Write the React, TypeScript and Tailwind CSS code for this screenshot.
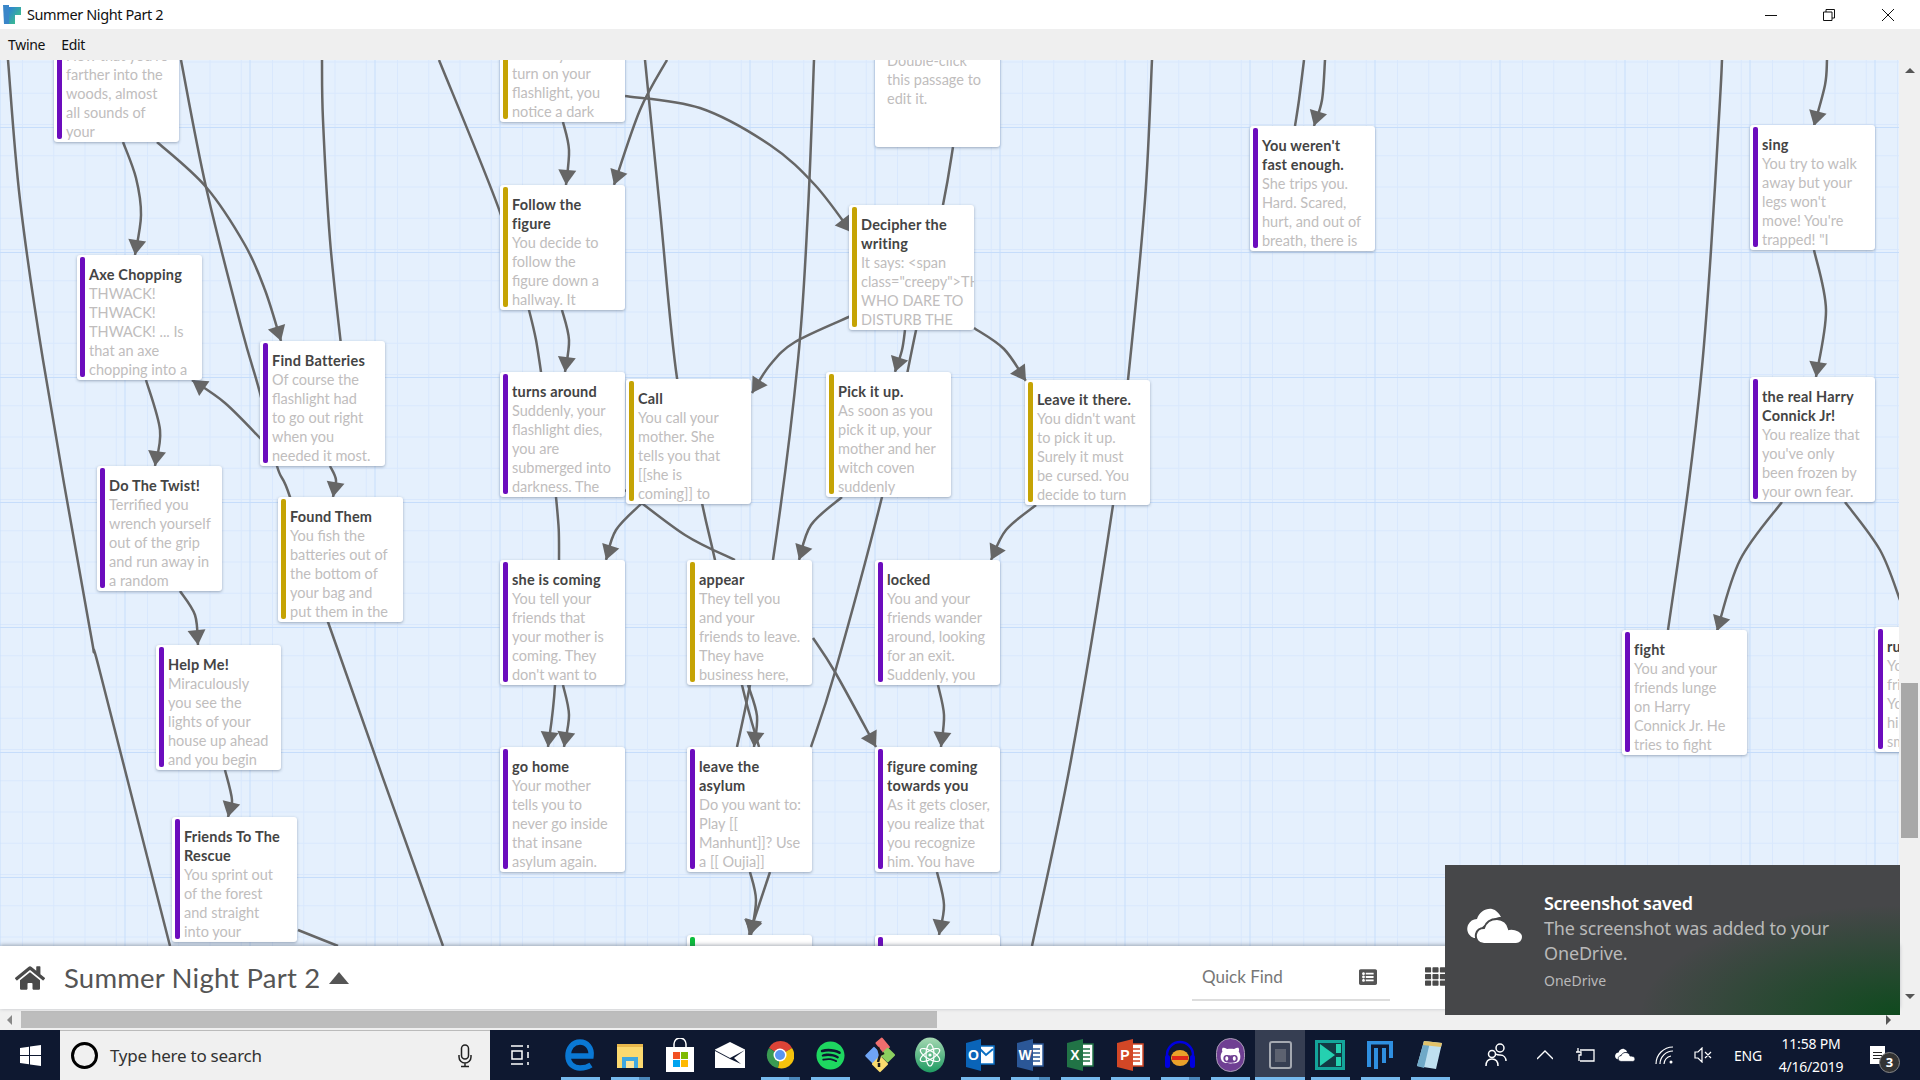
import React from 'react';
import { FaHome, FaListAlt, FaTh, FaSpotify, FaGithubAlt } from 'react-icons/fa';

type Pt = [number, number];

const PURPLE = 'bg-[#6c0cbd]';
const GOLD = 'bg-[#c5a304]';
const GREEN = 'bg-[#0cbd3c]';

const passages: { x: number; y: number; bar?: string; title: string[]; text: string[] }[] = [
  { x: 54, y: 17, bar: PURPLE, title: [''], text: ["Now that you're", 'farther into the', 'woods, almost', 'all sounds of', 'your'] },
  { x: 77, y: 255, bar: PURPLE, title: ['Axe Chopping'], text: ['THWACK!', 'THWACK!', 'THWACK! ... Is', 'that an axe', 'chopping into a'] },
  { x: 260, y: 341, bar: PURPLE, title: ['Find Batteries'], text: ['Of course the', 'flashlight had', 'to go out right', 'when you', 'needed it most.'] },
  { x: 97, y: 466, bar: PURPLE, title: ['Do The Twist!'], text: ['Terrified you', 'wrench yourself', 'out of the grip', 'and run away in', 'a random'] },
  { x: 278, y: 497, bar: GOLD, title: ['Found Them'], text: ['You fish the', 'batteries out of', 'the bottom of', 'your bag and', 'put them in the'] },
  { x: 156, y: 645, bar: PURPLE, title: ['Help Me!'], text: ['Miraculously', 'you see the', 'lights of your', 'house up ahead', 'and you begin'] },
  { x: 172, y: 817, bar: PURPLE, title: ['Friends To The', 'Rescue'], text: ['You sprint out', 'of the forest', 'and straight', 'into your'] },
  { x: 500, y: -3, bar: GOLD, title: [''], text: ['', 'Just as you', 'turn on your', 'flashlight, you', 'notice a dark'] },
  { x: 500, y: 185, bar: GOLD, title: ['Follow the', 'figure'], text: ['You decide to', 'follow the', 'figure down a', 'hallway. It'] },
  { x: 500, y: 372, bar: PURPLE, title: ['turns around'], text: ['Suddenly, your', 'flashlight dies,', 'you are', 'submerged into', 'darkness. The'] },
  { x: 626, y: 379, bar: GOLD, title: ['Call'], text: ['You call your', 'mother. She', 'tells you that', '[[she is', 'coming]] to'] },
  { x: 826, y: 372, bar: GOLD, title: ['Pick it up.'], text: ['As soon as you', 'pick it up, your', 'mother and her', 'witch coven', 'suddenly'] },
  { x: 1025, y: 380, bar: GOLD, title: ['Leave it there.'], text: ["You didn't want", 'to pick it up.', 'Surely it must', 'be cursed. You', 'decide to turn'] },
  { x: 500, y: 560, bar: PURPLE, title: ['she is coming'], text: ['You tell your', 'friends that', 'your mother is', 'coming. They', "don't want to"] },
  { x: 687, y: 560, bar: GOLD, title: ['appear'], text: ['They tell you', 'and your', 'friends to leave.', 'They have', 'business here,'] },
  { x: 875, y: 560, bar: PURPLE, title: ['locked'], text: ['You and your', 'friends wander', 'around, looking', 'for an exit.', 'Suddenly, you'] },
  { x: 500, y: 747, bar: PURPLE, title: ['go home'], text: ['Your mother', 'tells you to', 'never go inside', 'that insane', 'asylum again.'] },
  { x: 687, y: 747, bar: PURPLE, title: ['leave the', 'asylum'], text: ['Do you want to:', 'Play [[', 'Manhunt]]? Use', 'a [[ Oujia]]'] },
  { x: 875, y: 747, bar: PURPLE, title: ['figure coming', 'towards you'], text: ['As it gets closer,', 'you realize that', 'you recognize', 'him. You have'] },
  { x: 687, y: 935, bar: GREEN, title: [''], text: [] },
  { x: 875, y: 935, bar: PURPLE, title: [''], text: [] },
  { x: 875, y: 22, title: [''], text: ['Double-click', 'this passage to', 'edit it.'] },
  { x: 849, y: 205, bar: GOLD, title: ['Decipher the', 'writing'], text: ['It says: <span', 'class="creepy">THOU', 'WHO DARE TO', 'DISTURB THE'] },
  { x: 1250, y: 126, bar: PURPLE, title: ["You weren't", 'fast enough.'], text: ['She trips you.', 'Hard. Scared,', 'hurt, and out of', 'breath, there is'] },
  { x: 1750, y: 125, bar: PURPLE, title: ['sing'], text: ['You try to walk', 'away but your', "legs won't", "move! You're", 'trapped! "I'] },
  { x: 1750, y: 377, bar: PURPLE, title: ['the real Harry', 'Connick Jr!'], text: ['You realize that', "you've only", 'been frozen by', 'your own fear.'] },
  { x: 1622, y: 630, bar: PURPLE, title: ['fight'], text: ['You and your', 'friends lunge', 'on Harry', 'Connick Jr. He', 'tries to fight'] },
  { x: 1875, y: 627, bar: PURPLE, title: ['run'], text: ['You and your', 'friends run.', 'You hit', 'him with', 'small'] },
];

// links drawn under the passages, arrow = arrowhead at the last point
const links: { pts: Pt[]; arrow?: boolean }[] = [
  { pts: [[8, 60], [20, 200], [43, 360], [90, 630], [100, 672], [170, 946]] },
  { pts: [[181, 60], [206, 187], [242, 330], [260, 393], [277, 466], [290, 497], [328, 622], [443, 946]] },
  { pts: [[123, 142], [136, 178], [141, 215], [135, 255]], arrow: true },
  { pts: [[157, 142], [206, 187], [245, 245], [265, 290], [281, 341]], arrow: true },
  { pts: [[322, 60], [323, 120], [330, 240], [341, 345]] },
  { pts: [[439, 60], [500, 212], [529, 310], [541, 372], [556, 497], [559, 560], [555, 685], [548, 747]], arrow: true },
  { pts: [[563, 122], [569, 150], [566, 185]], arrow: true },
  { pts: [[667, 60], [640, 110], [614, 185]], arrow: true },
  { pts: [[562, 310], [569, 340], [565, 372]], arrow: true },
  { pts: [[645, 60], [660, 210], [677, 378], [702, 503], [715, 560], [742, 685], [759, 747]] },
  { pts: [[625, 96], [700, 108], [770, 145], [815, 185], [851, 232]], arrow: true },
  { pts: [[814, 60], [808, 210], [798, 360], [773, 560], [750, 685], [737, 747]] },
  { pts: [[748, 685], [757, 716], [754, 747]], arrow: true },
  { pts: [[642, 503], [616, 530], [606, 560]], arrow: true },
  { pts: [[625, 490], [685, 535], [735, 560]] },
  { pts: [[851, 316], [795, 342], [770, 365], [752, 393]], arrow: true },
  { pts: [[905, 330], [902, 350], [895, 372]], arrow: true },
  { pts: [[953, 147], [943, 205], [915, 335], [900, 410], [882, 497], [835, 672], [811, 747]] },
  { pts: [[842, 497], [811, 525], [799, 560]], arrow: true },
  { pts: [[974, 328], [1004, 349], [1026, 381]], arrow: true },
  { pts: [[1036, 505], [1006, 530], [991, 560]], arrow: true },
  { pts: [[1152, 60], [1145, 200], [1128, 380], [1113, 505], [1071, 760], [1032, 946]] },
  { pts: [[813, 638], [835, 672], [876, 747]], arrow: true },
  { pts: [[563, 685], [569, 715], [564, 747]], arrow: true },
  { pts: [[938, 685], [944, 715], [941, 747]], arrow: true },
  { pts: [[750, 872], [756, 900], [751, 935]], arrow: true },
  { pts: [[770, 872], [749, 935]], arrow: true },
  { pts: [[937, 872], [944, 905], [939, 935]], arrow: true },
  { pts: [[146, 380], [160, 430], [155, 466]], arrow: true },
  { pts: [[262, 440], [225, 403], [192, 380]], arrow: true },
  { pts: [[330, 466], [336, 480], [333, 497]], arrow: true },
  { pts: [[180, 591], [195, 615], [198, 645]], arrow: true },
  { pts: [[225, 770], [232, 800], [228, 817]], arrow: true },
  { pts: [[298, 930], [338, 946]] },
  { pts: [[1304, 60], [1299, 100], [1295, 126]] },
  { pts: [[1325, 60], [1322, 100], [1314, 126]], arrow: true },
  { pts: [[1722, 60], [1720, 100], [1711, 250], [1702, 367], [1688, 490], [1668, 630]] },
  { pts: [[1827, 60], [1825, 85], [1814, 126]], arrow: true },
  { pts: [[1814, 250], [1826, 310], [1816, 377]], arrow: true },
  { pts: [[1782, 502], [1740, 560], [1717, 631]], arrow: true },
  { pts: [[1845, 502], [1880, 550], [1900, 600]] },
];

function smooth(pts: Pt[]) {
  let d = `M${pts[0][0]} ${pts[0][1]}`;
  for (let i = 0; i < pts.length - 1; i++) {
    const p0 = pts[i - 1] || pts[i];
    const p1 = pts[i];
    const p2 = pts[i + 1];
    const p3 = pts[i + 2] || p2;
    d += ` C${p1[0] + (p2[0] - p0[0]) / 6} ${p1[1] + (p2[1] - p0[1]) / 6} ${p2[0] - (p3[0] - p1[0]) / 6} ${p2[1] - (p3[1] - p1[1]) / 6} ${p2[0]} ${p2[1]}`;
  }
  return d;
}

function Links() {
  return (
    <svg className="absolute left-0 top-0" width="1899" height="886" viewBox="0 60 1899 886" fill="none">
      {links.map((l, i) => {
        const a = l.pts[l.pts.length - 2];
        const b = l.pts[l.pts.length - 1];
        const deg = (Math.atan2(b[1] - a[1], b[0] - a[0]) * 180) / Math.PI;
        return (
          <g key={i}>
            <path d={smooth(l.pts)} stroke="#666" strokeWidth="2.5" />
            {l.arrow && <polygon points="0,0 -15,-9 -15,9" fill="#666" transform={`translate(${b[0]} ${b[1]}) rotate(${deg})`} />}
          </g>
        );
      })}
    </svg>
  );
}

function Passage({ p }: { p: (typeof passages)[number] }) {
  return (
    <div
      className="absolute w-[125px] h-[125px] bg-white rounded-[3px] shadow-[0_1px_3px_rgba(60,80,110,0.45)] overflow-hidden pl-3 pt-[10px] font-['Lato',sans-serif] text-[14.5px] leading-[19px] whitespace-nowrap"
      style={{ left: p.x, top: p.y - 60 }}
    >
      {p.bar && <div className={`absolute left-[3px] top-[2px] w-[5px] h-[120px] rounded-[2px] ${p.bar}`} />}
      {p.title.map((t, i) => (
        <div key={i} className="font-bold text-[#444] h-[19px] tracking-[0.2px]">{t}</div>
      ))}
      {p.text.map((t, i) => (
        <div key={i} className="text-[#c0bdbd] h-[19px]">{t}</div>
      ))}
    </div>
  );
}

function OfficeIcon({ color, letter }: { color: string; letter: string }) {
  return (
    <svg width="30" height="32" viewBox="0 0 30 32">
      <rect x="13" y="5" width="15" height="22" fill="#fff" stroke={color} strokeWidth="1.5" />
      <path d="M17 10h8M17 14h8M17 18h8M17 22h8" stroke={color} strokeWidth="1.5" />
      <polygon points="2,4 18,0 18,32 2,28" fill={color} />
      <text x="10" y="21" textAnchor="middle" fontSize="14" fontWeight="700" fill="#fff" fontFamily="Liberation Sans, sans-serif">{letter}</text>
    </svg>
  );
}

const apps: { bar: '' | 'full' | 'split'; active?: boolean; icon: React.ReactNode }[] = [
  {
    bar: 'full',
    icon: (
      <svg width="30" height="32" viewBox="0 0 30 32" fill="none" stroke="#0a78d4" strokeWidth="5.5">
        <path d="M4 17h22c1-8-4-14-11-14C8 3 3 9 3 17c0 8 6 12 12 12 4 0 8-1 11-3" />
      </svg>
    ),
  },
  {
    bar: 'split',
    icon: (
      <svg width="30" height="30" viewBox="0 0 30 30">
        <path d="M2 4h10l2 3h14v21H2z" fill="#fbd96f" />
        <rect x="2" y="4" width="26" height="3" fill="#e9b84c" />
        <rect x="7" y="17" width="16" height="11" fill="#3fa7e0" />
        <rect x="11" y="21" width="8" height="7" fill="#fbe49b" />
      </svg>
    ),
  },
  {
    bar: '',
    icon: (
      <svg width="30" height="34" viewBox="0 0 30 34">
        <path d="M9 9V6a6 6 0 0 1 12 0v3" fill="none" stroke="#fff" strokeWidth="1.5" />
        <rect x="1" y="9" width="28" height="25" fill="#fff" />
        <rect x="8" y="14" width="7" height="7" fill="#f25022" />
        <rect x="16" y="14" width="7" height="7" fill="#7fba00" />
        <rect x="8" y="22" width="7" height="7" fill="#00a4ef" />
        <rect x="16" y="22" width="7" height="7" fill="#ffb900" />
      </svg>
    ),
  },
  {
    bar: '',
    icon: (
      <svg width="30" height="26" viewBox="0 0 30 26">
        <path d="M0 7.5L15 0l15 7.5V26H0z" fill="#fff" />
        <path d="M0 8l15 8 15-8-11 8 7 6-11-5L0 9z" fill="#0e1830" />
      </svg>
    ),
  },
  {
    bar: 'split',
    icon: (
      <svg width="28" height="32" viewBox="0 0 28 28">
        <path d="M14 14L3 7a13 13 0 0 1 23 0z" fill="#dc4437" />
        <path d="M14 14l12-7a13 13 0 0 1-14 20z" fill="#f4c20d" />
        <path d="M14 14l-2 13A13 13 0 0 1 3 7z" fill="#3a9a52" />
        <circle cx="14" cy="14" r="6.5" fill="#fff" />
        <circle cx="14" cy="14" r="5" fill="#5a95f0" />
      </svg>
    ),
  },
  { bar: 'full', icon: <FaSpotify className="text-[#1ed760]" size={29} /> },
  {
    bar: '',
    icon: (
      <svg width="32" height="36" viewBox="0 0 32 36">
        <rect x="14" y="2" width="9" height="13" rx="1" transform="rotate(-40 18 8)" fill="#ef6e6e" />
        <rect x="4" y="12" width="13" height="13" rx="1" transform="rotate(45 10 18)" fill="#6fa4f5" />
        <rect x="18" y="12" width="11" height="11" rx="1" transform="rotate(45 23 18)" fill="#8ccf5f" />
        <rect x="10" y="21" width="12" height="12" rx="1" transform="rotate(45 16 27)" fill="#fadb6e" />
        <path d="M14 10l2 8-2 7M16 18l4-2M15 26v4" stroke="#1a1a1a" strokeWidth="2.5" fill="none" />
      </svg>
    ),
  },
  {
    bar: '',
    icon: (
      <svg width="32" height="36" viewBox="0 0 32 36">
        <defs>
          <linearGradient id="atomg" x1="0" y1="0" x2="0" y2="1">
            <stop offset="0" stopColor="#a5d8b2" />
            <stop offset="1" stopColor="#1f9b62" />
          </linearGradient>
        </defs>
        <ellipse cx="16" cy="18" rx="15" ry="17.5" fill="url(#atomg)" />
        <g fill="none" stroke="#fff" strokeWidth="1.2">
          <ellipse cx="16" cy="18" rx="4" ry="11" />
          <ellipse cx="16" cy="18" rx="4" ry="11" transform="rotate(60 16 18)" />
          <ellipse cx="16" cy="18" rx="4" ry="11" transform="rotate(-60 16 18)" />
        </g>
        <circle cx="16" cy="18" r="1.6" fill="#fff" />
      </svg>
    ),
  },
  {
    bar: 'full',
    icon: (
      <svg width="30" height="32" viewBox="0 0 30 32">
        <rect x="14" y="7" width="15" height="18" fill="#fff" stroke="#0a6fc4" strokeWidth="1.5" />
        <path d="M15 10l6 6 7-6" fill="none" stroke="#0a6fc4" strokeWidth="2" />
        <polygon points="1,4 16,0 16,32 1,28" fill="#0a64b8" />
        <text x="8.5" y="21" textAnchor="middle" fontSize="14" fontWeight="700" fill="#fff" fontFamily="Liberation Sans, sans-serif">O</text>
      </svg>
    ),
  },
  { bar: 'split', icon: <OfficeIcon color="#2b5797" letter="W" /> },
  { bar: 'full', icon: <OfficeIcon color="#217346" letter="X" /> },
  { bar: 'full', icon: <OfficeIcon color="#d24726" letter="P" /> },
  {
    bar: 'split',
    icon: (
      <svg width="32" height="32" viewBox="0 0 32 32">
        <path d="M3 22V16a13 13 0 0 1 26 0v6" fill="none" stroke="#0000e0" strokeWidth="2.5" />
        <rect x="1" y="16" width="5" height="13" rx="2.5" fill="#0000e0" />
        <rect x="26" y="16" width="5" height="13" rx="2.5" fill="#0000e0" />
        <ellipse cx="16" cy="19" rx="9" ry="8" fill="#e9a22a" />
        <rect x="8" y="17" width="16" height="4" fill="#e02a1a" />
      </svg>
    ),
  },
  {
    bar: 'full',
    icon: (
      <div className="w-[29px] h-[34px] rounded-full bg-[#6f3f93] border border-[#a99cb5] flex items-center justify-center">
        <FaGithubAlt className="text-white" size={21} />
      </div>
    ),
  },
  {
    bar: 'full',
    active: true,
    icon: (
      <div className="w-[23px] h-[28px] rounded-[3px] border-2 border-[#a4a8b0] flex items-center justify-center">
        <div className="w-[11px] h-[13px] bg-[#5d6270]" />
      </div>
    ),
  },
  {
    bar: 'full',
    icon: (
      <svg width="30" height="30" viewBox="0 0 30 30">
        <rect width="30" height="30" fill="#14a49a" />
        <rect x="3" y="3" width="24" height="24" fill="#123a44" />
        <polygon points="5,4 20,15 5,26" fill="#25d0b0" />
        <rect x="21" y="4" width="5" height="9" fill="#25d0b0" />
        <rect x="21" y="17" width="5" height="9" fill="#25d0b0" />
      </svg>
    ),
  },
  {
    bar: 'full',
    icon: (
      <svg width="26" height="30" viewBox="0 0 26 30" fill="#2f8fe0">
        <rect x="0" y="1" width="26" height="3.5" />
        <rect x="0" y="1" width="4" height="26" />
        <rect x="22" y="1" width="4" height="17" />
        <rect x="7" y="8" width="4" height="21" />
        <rect x="15" y="8" width="4" height="15" />
      </svg>
    ),
  },
  {
    bar: 'full',
    icon: (
      <svg width="28" height="32" viewBox="0 0 28 32">
        <polygon points="8,2 26,4 20,30 1,27" fill="#bfe0f0" />
        <polygon points="8,2 14,3 8,29 1,27" fill="#6fa9c8" />
        <polygon points="8,2 26,4 25,8 7,6" fill="#e2c26a" />
      </svg>
    ),
  },
];

function Cloud({ className, gap }: { className: string; gap: string }) {
  return (
    <svg className={className} viewBox="0 0 56 36" fill="#fff">
      <path d="M7 30C1 28-1 22 1 17c2-4 5-6 9-6 2-7 9-11 15-10 4 1 7 4 9 8-5 0-9 2-12 7-6 0-10 5-9 14z" />
      <path d="M17 36c-6 0-9-5-8-10 1-4 4-6 8-6 2-6 7-9 13-9 6 0 11 4 12 10 7-1 14 3 14 8 0 4-3 7-7 7z" stroke={gap} strokeWidth="2" />
    </svg>
  );
}

export default function App() {
  return (
    <div className="w-[1920px] h-[1080px] relative flex flex-col overflow-hidden bg-white font-['Lato',sans-serif]">
      {/* title bar */}
      <div className="h-[29px] flex items-center bg-white">
        <svg className="ml-[3px]" width="18" height="19" viewBox="0 0 18 19">
          <defs>
            <linearGradient id="twg" x1="0" y1="0" x2="1" y2="1">
              <stop offset="0" stopColor="#2e7fd6" />
              <stop offset="1" stopColor="#3fd07a" />
            </linearGradient>
          </defs>
          <path d="M0 0h6v19H1z" fill="#3a86c8" />
          <path d="M6 2h12v8h-6v9H6z" fill="url(#twg)" />
        </svg>
        <span className="ml-[6px] text-[14.5px] text-[#111] font-['Noto_Sans',sans-serif] tracking-[-0.4px]">Summer Night Part 2</span>
        <div className="ml-auto flex items-center">
          <svg className="mr-[46px]" width="12" height="12" viewBox="0 0 12 12"><path d="M0 6.5h12" stroke="#111" /></svg>
          <svg className="mr-[47px]" width="12" height="12" viewBox="0 0 12 12" fill="none" stroke="#111"><path d="M.5 3h8.5v8.5H.5zM3 3V.5h8.5V9H9" /></svg>
          <svg className="mr-[26px]" width="12" height="12" viewBox="0 0 12 12" stroke="#111"><path d="M0 0l12 12M12 0L0 12" /></svg>
        </div>
      </div>

      {/* menu bar */}
      <div className="h-[31px] flex items-center bg-[#efefef] pl-2 gap-4 text-[14px] text-[#111] font-['Noto_Sans',sans-serif] tracking-[-0.3px]">
        <span>Twine</span>
        <span>Edit</span>
      </div>

      <div className="flex h-[949px]">
        <div className="w-[1899px] flex flex-col">
          {/* story map */}
          <div className="relative h-[886px] overflow-hidden bg-[#e5f0fd] bg-[linear-gradient(#c6ddfb_1.5px,transparent_1.5px),linear-gradient(90deg,#c6ddfb_1.5px,transparent_1.5px),linear-gradient(#d9e8fd_1px,transparent_1px),linear-gradient(90deg,#d9e8fd_1px,transparent_1px)] [background-size:125px_125px,125px_125px,31.25px_31.25px,31.25px_31.25px] [background-position:0_67px,-0.5px_0,0_1.5px,22px_0]">
            <Links />
            {passages.map((p, i) => (
              <Passage key={i} p={p} />
            ))}
          </div>

          {/* bottom bar */}
          <div className="relative h-[63px] bg-white shadow-[0_-1px_4px_rgba(60,70,90,0.45)] flex items-center text-[#555]">
            <FaHome className="ml-[15px] text-[#4a4a4a]" size={30} />
            <span className="ml-[19px] text-[27.5px] tracking-[0.2px] font-normal">Summer Night Part 2</span>
            <div className="ml-[9px] w-0 h-0 border-x-[10px] border-x-transparent border-b-[12px] border-b-[#555]" />
            <div className="absolute left-[1192px] top-0 w-[198px] h-[55px] border-b-2 border-[#ddd] flex items-center pl-[10px] pt-[8px] text-[17px] text-[#777]">
              Quick Find
              <FaListAlt className="ml-auto mr-[13px] text-[#555]" size={18} />
            </div>
            <FaTh className="absolute left-[1425px] top-[20px] text-[#4a4a4a]" size={21} />
          </div>
        </div>

        {/* vertical scrollbar */}
        <div className="w-[21px] bg-[#f0f0f0] flex flex-col items-center">
          <div className="mt-[8px] w-0 h-0 border-x-[5px] border-x-transparent border-b-[5px] border-b-[#555]" />
          <div className="mt-[610px] w-[17px] h-[155px] bg-[#a8a8a8]" />
          <div className="mt-[156px] w-0 h-0 border-x-[5px] border-x-transparent border-t-[5px] border-t-[#555]" />
        </div>
      </div>

      {/* horizontal scrollbar */}
      <div className="h-[21px] bg-[#f0f0f0] flex items-center">
        <div className="ml-[7px] w-0 h-0 border-y-[5px] border-y-transparent border-r-[5px] border-r-[#888]" />
        <div className="ml-[9px] w-[916px] h-[17px] bg-[#bdbdbd]" />
        <div className="ml-[949px] w-0 h-0 border-y-[5px] border-y-transparent border-l-[5px] border-l-[#555]" />
      </div>

      {/* windows taskbar */}
      <div className="h-[50px] flex items-stretch bg-[#0e1830] text-white font-['Noto_Sans',sans-serif]">
        <div className="w-[60px] flex items-center justify-center">
          <svg width="21" height="21" viewBox="0 0 21 21" fill="#fff">
            <path d="M0 3l9-1.3V10H0zM10 1.5L21 0v10H10zM0 11h9v8.3L0 18zM10 11h11v10l-11-1.5z" />
          </svg>
        </div>
        <div className="w-[430px] bg-[#f0f0f0] border-t border-[#bbb] flex items-center text-[#333]">
          <div className="ml-[11px] w-[27px] h-[27px] rounded-full border-[3px] border-black" />
          <span className="ml-[12px] text-[17px] tracking-[-0.25px]">Type here to search</span>
          <svg className="ml-auto mr-[18px]" width="14" height="24" viewBox="0 0 14 24" fill="none" stroke="#222" strokeWidth="1.5">
            <rect x="3.5" y="1" width="7" height="14" rx="3.5" />
            <path d="M1 11v2a6 6 0 0 0 12 0v-2M7 19v3M3 22.5h8" />
          </svg>
        </div>
        <div className="w-[65px] flex items-center justify-center pr-[6px]">
          <svg width="20" height="28" viewBox="0 0 20 28" fill="none" stroke="#fff" strokeWidth="1.5">
            <path d="M1 5h12M1 23h12M2 10h10v8H2zM18 4v3M18 11v6M18 21v3" />
          </svg>
        </div>
        {apps.map((a, i) => (
          <div key={i} className={`w-[50px] relative flex items-center justify-center ${a.active ? 'bg-[#ffffff2b]' : ''}`}>
            {a.icon}
            {a.bar && (
              <div className={`absolute bottom-0 h-[3px] flex ${a.active ? 'left-0 right-0' : 'left-[6px] right-[5px]'}`}>
                <div className="flex-1 bg-[#76b9ed]" />
                {a.bar === 'split' && <div className="w-[11px] bg-[#4a86b8]" />}
              </div>
            )}
          </div>
        ))}
        <div className="w-[82px] flex items-center justify-center">
          <svg width="22" height="24" viewBox="0 0 22 24" fill="none" stroke="#fff" strokeWidth="1.5">
            <circle cx="7" cy="11" r="3.5" />
            <circle cx="15" cy="5" r="4" />
            <path d="M1 23c0-4 2-7 6-7s6 3 6 7M11 11c1 1 3 1 4 1 4 0 6 3 6 6" />
          </svg>
        </div>
        <div className="w-[16px] flex items-center justify-center">
          <svg width="16" height="10" viewBox="0 0 16 10" fill="none" stroke="#fff" strokeWidth="1.3"><path d="M0 9l8-8 8 8" /></svg>
        </div>
        <div className="w-[64px] flex items-center justify-center">
          <svg width="20" height="16" viewBox="0 0 20 16" fill="none" stroke="#fff" strokeWidth="1.3">
            <path d="M5 3h14v11H5M3 1v4M1 5h5v3H4v6" />
          </svg>
        </div>
        <div className="w-[16px] flex items-center justify-center">
          <Cloud className="w-[20px] h-[14px] shrink-0" gap="#0e1830" />
        </div>
        <div className="w-[64px] flex items-center justify-center">
          <svg width="20" height="20" viewBox="0 0 20 20" fill="none" stroke="#fff" strokeWidth="1.2">
            <path d="M1 19A17 17 0 0 1 18 2M5 19A13 13 0 0 1 18 6M9 19a9 9 0 0 1 7-8" />
            <circle cx="16" cy="17" r="1.5" fill="#fff" stroke="none" />
          </svg>
        </div>
        <div className="w-[12px] flex items-center justify-center">
          <svg className="shrink-0" width="18" height="16" viewBox="0 0 18 16" fill="none" stroke="#fff" strokeWidth="1.2">
            <path d="M1 5h3l4-4v14l-4-4H1zM11 5l6 6M17 5l-6 6" />
          </svg>
        </div>
        <div className="w-[78px] flex items-center justify-center text-[14px] tracking-[-0.2px]">ENG</div>
        <div className="w-[48px] flex flex-col items-center justify-center text-[14px] leading-[23px] whitespace-nowrap tracking-[-0.2px]">
          <span>11:58 PM</span>
          <span>4/16/2019</span>
        </div>
        <div className="w-[85px] relative flex items-center justify-center">
          <div className="w-[15px] h-[18px] bg-white flex flex-col justify-center gap-[2px] px-[3px]">
            <div className="h-px bg-[#222]" />
            <div className="h-px bg-[#222]" />
            <div className="h-px bg-[#222]" />
          </div>
          <div className="absolute left-[44px] top-[22px] w-[21px] h-[21px] rounded-full bg-[#333] border border-[#888] flex items-center justify-center text-[13px] font-bold">3</div>
        </div>
      </div>

      {/* onedrive toast */}
      <div className="absolute left-[1445px] top-[865px] w-[455px] h-[150px] bg-[#464749] bg-[radial-gradient(ellipse_260px_110px_at_100%_100%,#0f4a1e,transparent)] flex text-white font-['Noto_Sans',sans-serif]">
        <Cloud className="ml-[22px] mt-[43px] w-[56px] h-[36px] shrink-0" gap="#464749" />
        <div className="ml-[21px] mt-[25px] flex flex-col">
          <span className="text-[18px] leading-[26px] font-semibold tracking-[-0.3px]">Screenshot saved</span>
          <span className="text-[#b9b9b9] text-[18px] leading-[25px] tracking-[-0.15px]">The screenshot was added to your</span>
          <span className="text-[#b9b9b9] text-[18px] leading-[25px] tracking-[-0.15px]">OneDrive.</span>
          <span className="mt-[4px] text-[#b9b9b9] text-[14px] leading-[22px]">OneDrive</span>
        </div>
      </div>
    </div>
  );
}
